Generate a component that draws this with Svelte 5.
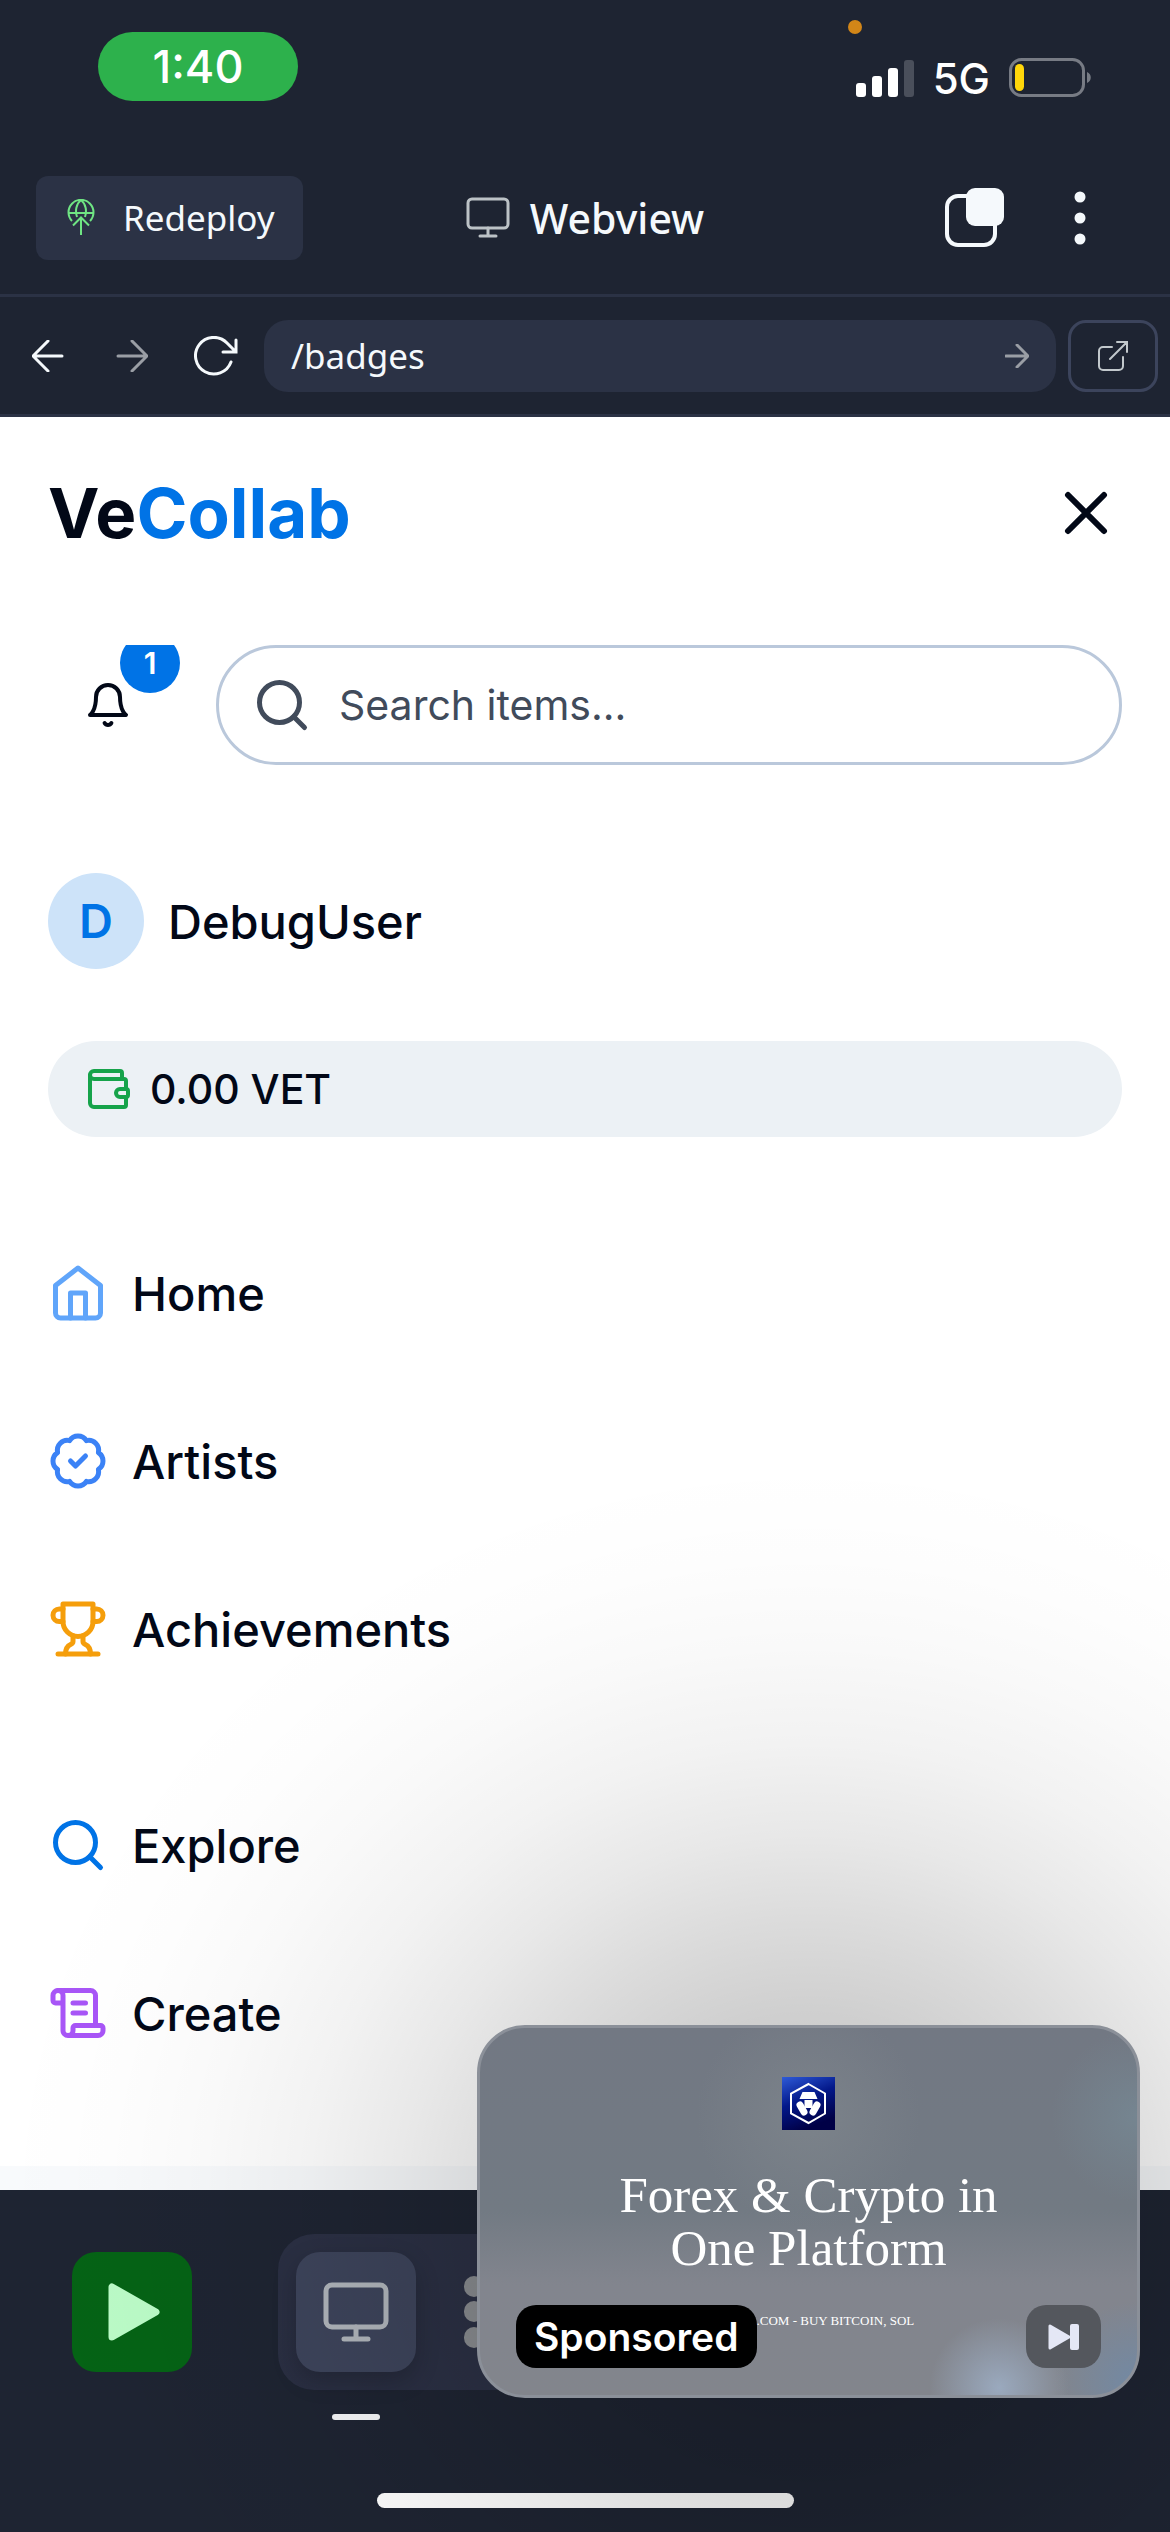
<script>
  const main = [
    { id: 'home', label: 'Home' },
    { id: 'artists', label: 'Artists' },
    { id: 'achievements', label: 'Achievements' },
  ];
  const extra = [
    { id: 'explore', label: 'Explore' },
    { id: 'create', label: 'Create' },
  ];
  const bars = [14, 21, 29, 37];
  let path = $state('/badges');
</script>

{#snippet navItem(item)}
  <li>
    <a class="nav-link" href="#{item.id}">
      <svg class="icon {item.id}" viewBox="0 0 24 24" width="60" height="60" aria-hidden="true">
        {#if item.id === 'home'}
          <path d="m3 9 9-7 9 7v11a2 2 0 0 1-2 2H5a2 2 0 0 1-2-2z" />
          <path d="M9 22V12h6v10" />
        {:else if item.id === 'artists'}
          <path d="M3.85 8.62a4 4 0 0 1 4.78-4.77 4 4 0 0 1 6.74 0 4 4 0 0 1 4.78 4.78 4 4 0 0 1 0 6.74 4 4 0 0 1-4.77 4.78 4 4 0 0 1-6.75 0 4 4 0 0 1-4.78-4.77 4 4 0 0 1 0-6.76Z" />
          <path d="m9 12 2 2 4-4" />
        {:else if item.id === 'achievements'}
          <path d="M6 9H4.5a2.5 2.5 0 0 1 0-5H6" />
          <path d="M18 9h1.5a2.5 2.5 0 0 0 0-5H18" />
          <path d="M4 22h16" />
          <path d="M10 14.66V17c0 .55-.47.98-.97 1.21C7.85 18.75 7 20.24 7 22" />
          <path d="M14 14.66V17c0 .55.47.98.97 1.21C16.15 18.75 17 20.24 17 22" />
          <path d="M18 2H6v7a6 6 0 0 0 12 0V2Z" />
        {:else if item.id === 'explore'}
          <circle cx="11" cy="11" r="8" />
          <path d="m21 21-4.3-4.3" />
        {:else}
          <path d="M15 12h-5M15 8h-5" />
          <path d="M19 17V5a2 2 0 0 0-2-2H4" />
          <path d="M8 21h12a2 2 0 0 0 2-2v-1a1 1 0 0 0-1-1H11a1 1 0 0 0-1 1v1a2 2 0 1 1-4 0V5a2 2 0 1 0-4 0v2a1 1 0 0 0 1 1h3" />
        {/if}
      </svg>
      {item.label}
    </a>
  </li>
{/snippet}

<div class="screen">
  <header class="chrome">
    <div class="status">
      <span class="clock">1:40</span>
      <div class="signals">
        <span class="mic-dot"></span>
        <svg width="58" height="37" viewBox="0 0 58 37" aria-hidden="true">
          {#each bars as h, i}
            <rect x={i * 16} y={37 - h} width="10" height={h} rx="3" fill={i === 3 ? '#4a4f5b' : '#fff'} />
          {/each}
        </svg>
        <span class="network">5G</span>
        <svg width="84" height="40" viewBox="0 0 84 40" aria-hidden="true">
          <rect x="1.5" y="1.5" width="73" height="36" rx="11" fill="none" stroke="#777b84" stroke-width="3" />
          <rect x="6" y="6" width="9" height="27" rx="4.5" fill="#ffd60a" />
          <path d="M78 14c5 2 5 9 0 11z" fill="#777b84" />
        </svg>
      </div>
    </div>

    <div class="toolbar">
      <button class="redeploy">
        <svg width="28" height="37" viewBox="0 0 28 37" fill="none" stroke="#6fe583" stroke-width="2" aria-hidden="true">
          <path d="M5 22a12.5 12.5 0 1 1 18 0" />
          <path d="M1 14h26M10 18C8 12 9 5 14 1c5 4 6 11 4 17" />
          <path d="M14 36V18M6 26.5l8-8 8 8" />
        </svg>
        Redeploy
      </button>
      <h1 class="view-name">
        <svg class="icon thin" viewBox="0 0 44 41" width="44" height="41" aria-hidden="true">
          <rect x="2" y="2" width="40" height="29" rx="4" />
          <path d="M22 31v8M14 39h16" />
        </svg>
        Webview
      </h1>
      <div class="tools">
        <button class="plain" aria-label="Tabs">
          <svg width="60" height="60" viewBox="0 0 60 60" aria-hidden="true">
            <rect x="3" y="8" width="48" height="49" rx="11" fill="none" stroke="#f5f9fc" stroke-width="4" />
            <rect x="22" y="0" width="38" height="38" rx="9" fill="#f5f9fc" />
          </svg>
        </button>
        <button class="plain" aria-label="More">
          <svg width="12" height="54" viewBox="0 0 12 54" fill="#f5f9fc" aria-hidden="true">
            <circle cx="6" cy="6" r="5.5" /><circle cx="6" cy="27" r="5.5" /><circle cx="6" cy="48" r="5.5" />
          </svg>
        </button>
      </div>
    </div>

    <form class="address" onsubmit={(e) => e.preventDefault()}>
      <button type="button" class="plain step" aria-label="Back">
        <svg class="icon small" viewBox="0 0 32 32" width="32" height="32" aria-hidden="true"><path d="M30 16H2M16 1 1 16l15 15" /></svg>
      </button>
      <button type="button" class="plain step dim" aria-label="Forward">
        <svg class="icon small" viewBox="0 0 32 32" width="32" height="32" aria-hidden="true"><path d="M2 16h28M16 1l15 15-15 15" /></svg>
      </button>
      <button type="button" class="plain step" aria-label="Reload">
        <svg class="icon small" viewBox="0 0 44 40" width="44" height="40" aria-hidden="true"><path d="M37 26A18.3 18.3 0 1 1 33 7l9 9M42 4v12H29" /></svg>
      </button>
      <div class="url">
        <input aria-label="Path" bind:value={path} />
        <button class="plain dim" aria-label="Go">
          <svg class="icon small" viewBox="0 0 24 24" width="24" height="24" aria-hidden="true"><path d="M1 12h21M12 1l11 11-11 11" /></svg>
        </button>
      </div>
      <button type="button" class="external" aria-label="Open in new tab">
        <svg class="icon fine" viewBox="0 0 30 30" width="30" height="30" aria-hidden="true"><path d="M14 6H5a4 4 0 0 0-4 4v15a4 4 0 0 0 4 4h16a4 4 0 0 0 4-4v-9M19 1h10v10M29 1 12 18" /></svg>
      </button>
    </form>
  </header>

  <main class="drawer">
    <div class="brand-row">
      <a class="brand" href="#top">Ve<span>Collab</span></a>
      <button class="plain" aria-label="Close menu">
        <svg class="icon" viewBox="0 0 24 24" width="72" height="72" aria-hidden="true"><path d="M18 6 6 18M6 6l12 12" /></svg>
      </button>
    </div>

    <div class="search-row">
      <button class="bell" aria-label="Notifications">
        <svg class="icon" viewBox="0 0 24 24" width="48" height="48" aria-hidden="true">
          <path d="M6 8a6 6 0 0 1 12 0c0 7 3 9 3 9H3s3-2 3-9" />
          <path d="M10.3 21a1.94 1.94 0 0 0 3.4 0" />
        </svg>
        <span class="badge">1</span>
      </button>
      <label class="search">
        <svg class="icon" viewBox="0 0 24 24" width="60" height="60" aria-hidden="true">
          <circle cx="11" cy="11" r="8" />
          <path d="m21 21-4.3-4.3" />
        </svg>
        <input type="search" aria-label="Search items" placeholder="Search items..." />
      </label>
    </div>

    <div class="user">
      <span class="avatar">D</span>
      <span>DebugUser</span>
    </div>

    <div class="wallet">
      <svg class="icon" viewBox="0 0 24 24" width="48" height="48" aria-hidden="true">
        <path d="M19 7V4a1 1 0 0 0-1-1H5a2 2 0 0 0 0 4h15a1 1 0 0 1 1 1v4h-3a2 2 0 0 0 0 4h3a1 1 0 0 0 1-1v-2a1 1 0 0 0-1-1" />
        <path d="M3 5v14a2 2 0 0 0 2 2h15a1 1 0 0 0 1-1v-4" />
      </svg>
      0.00 VET
    </div>

    <nav>
      <ul>{#each main as item}{@render navItem(item)}{/each}</ul>
      <ul>{#each extra as item}{@render navItem(item)}{/each}</ul>
    </nav>
  </main>
  <div class="page-edge"></div>

  <footer class="dock">
    <button class="run" aria-label="Run">
      <svg width="52" height="58" viewBox="0 0 52 58" aria-hidden="true">
        <path d="M4 4v50l44-25z" fill="#bbfbc7" stroke="#bbfbc7" stroke-width="7" stroke-linejoin="round" />
      </svg>
    </button>
    <div class="tabs">
      <div class="tab-slot">
        <button class="tab active" aria-label="Webview tab">
          <svg class="icon thick" viewBox="0 0 66 60" width="66" height="60" aria-hidden="true">
            <rect x="3" y="3" width="60" height="42" rx="6" />
            <path d="M33 45v12M21 57h24" />
          </svg>
        </button>
        <span class="indicator"></span>
      </div>
      <button class="tab" aria-label="All tools">
        <svg width="60" height="72" viewBox="0 0 60 72" fill="#898c90" aria-hidden="true">
          {#each [0, 25, 51] as y}
            {#each [0, 20, 40] as x}
              <rect {x} {y} width="20" height="21" rx="10" />
            {/each}
          {/each}
        </svg>
      </button>
    </div>
    <div class="home-bar"></div>
  </footer>

  <aside class="floating">
    <div class="ad">
      <svg class="ad-logo" width="53" height="53" viewBox="0 0 53 53" aria-hidden="true">
        <defs>
          <linearGradient id="adblue" x1="0" y1="0" x2="0.4" y2="1">
            <stop offset="0" stop-color="#2f5bd8" />
            <stop offset="0.5" stop-color="#03188a" />
            <stop offset="1" stop-color="#000046" />
          </linearGradient>
        </defs>
        <rect width="53" height="53" fill="url(#adblue)" />
        <path d="M26.5 7 43 16.5v20L26.5 46 9 36.5v-20z" fill="none" stroke="#fff" stroke-width="2" />
        <path d="M20.5 15h12l3 7h-18zM22.5 23h8v8h-8z" fill="#fff" />
        <path d="m18 28 4 7M35 28l-4 7" stroke="#fff" stroke-width="7" stroke-linecap="round" />
      </svg>
      <p class="ad-title">Forex &amp; Crypto in<br />One Platform</p>
      <div class="ad-row">
        <span class="sponsored">Sponsored</span>
        <span class="ad-note">.COM - BUY BITCOIN, SOL</span>
        <button class="skip" aria-label="Skip">
          <svg width="31" height="26" viewBox="0 0 31 26" fill="#e4e7f5" aria-hidden="true">
            <path d="M2 2v22l19-11z" stroke="#e4e7f5" stroke-width="3" stroke-linejoin="round" />
            <rect x="22" y="0" width="9" height="26" rx="2" />
          </svg>
        </button>
      </div>
    </div>
  </aside>
</div>

<style>
  :global(body) {
    margin: 0;
    background: #1e2432;
  }
  * {
    box-sizing: border-box;
  }
  svg {
    display: block;
    flex: none;
  }
  button,
  input {
    font: inherit;
    color: inherit;
    border: 0;
    padding: 0;
    background: none;
  }
  input {
    outline: none;
    min-width: 0;
    flex: 1;
  }
  .icon {
    fill: none;
    stroke: currentColor;
    stroke-width: 2;
    stroke-linecap: round;
    stroke-linejoin: round;
  }
  .screen {
    position: relative;
    display: flex;
    flex-direction: column;
    min-height: 100vh;
    overflow: hidden;
    font-family: Inter, 'Liberation Sans', sans-serif;
    color: #020817;
  }

  .chrome {
    background: #1e2432;
    color: #f5f9fc;
    font-family: 'Noto Sans', sans-serif;
  }
  .plain {
    display: flex;
    align-items: center;
    justify-content: center;
  }
  .status {
    display: flex;
    justify-content: space-between;
    align-items: flex-start;
    padding: 32px 77px 0 98px;
    height: 141px;
    color: #fff;
    font-family: Inter, sans-serif;
    font-weight: 500;
  }
  .clock {
    width: 200px;
    line-height: 69px;
    border-radius: 35px;
    background: #2db14c;
    text-align: center;
    font-size: 45px;
  }
  .signals {
    position: relative;
    display: flex;
    align-items: center;
    gap: 19px;
    height: 92px;
  }
  .mic-dot {
    position: absolute;
    left: -8px;
    top: -12px;
    width: 14px;
    height: 14px;
    border-radius: 50%;
    background: #d28618;
  }
  .network {
    font-size: 42px;
  }
  .toolbar {
    display: grid;
    grid-template-columns: 1fr auto 1fr;
    align-items: center;
    height: 153px;
    padding: 0 36px;
  }
  .redeploy {
    display: flex;
    align-items: center;
    justify-self: start;
    gap: 28px;
    height: 84px;
    padding: 0 28px 0 31px;
    border-radius: 12px;
    background: #2b3245;
    font-size: 35px;
  }
  .view-name {
    display: flex;
    align-items: center;
    gap: 20px;
    margin: 0;
    font-size: 41px;
    font-weight: 500;
  }
  .thin {
    color: #bcc2c6;
    stroke-width: 3;
  }
  .thick {
    color: #b0b5bb;
    stroke-width: 5;
  }
  .tools {
    display: flex;
    justify-self: end;
    align-items: center;
    gap: 70px;
    padding-right: 48px;
  }
  .address {
    display: flex;
    align-items: center;
    height: 123px;
    padding: 0 12px 0 6px;
    border-top: 3px solid #2b3245;
    border-bottom: 3px solid #2b3245;
    font-size: 35px;
  }
  .step {
    width: 84px;
    height: 72px;
  }
  .small {
    stroke-width: 3;
    stroke-linejoin: miter;
  }
  .fine {
    stroke-linejoin: miter;
  }
  .dim {
    color: #9a9ea5;
  }
  .url {
    display: flex;
    align-items: center;
    flex: 1;
    min-width: 0;
    height: 72px;
    margin: 0 12px 0 6px;
    padding: 0 27px;
    border-radius: 24px;
    background: #2b3245;
  }
  .external {
    display: flex;
    align-items: center;
    justify-content: center;
    width: 90px;
    height: 72px;
    border: 3px solid #3c445c;
    border-radius: 18px;
    color: #c2c8cc;
  }

  .drawer {
    flex: 1;
    padding: 60px 48px 93px;
    background: #fff;
  }
  .brand-row {
    display: flex;
    align-items: center;
    justify-content: space-between;
    height: 72px;
  }
  .brand {
    color: inherit;
    font-size: 69px;
    font-weight: 700;
    line-height: 68px;
    text-decoration: none;
  }
  .brand span {
    color: #0073e6;
  }
  .search-row {
    display: flex;
    gap: 48px;
    height: 120px;
    margin-top: 96px;
    overflow: hidden;
  }
  .bell {
    position: relative;
    display: flex;
    align-items: center;
    justify-content: center;
    width: 120px;
  }
  .badge {
    position: absolute;
    top: -12px;
    right: -12px;
    width: 60px;
    border-radius: 30px;
    background: #0073e6;
    color: #fff;
    font-size: 30px;
    font-weight: 600;
    line-height: 60px;
  }
  .search {
    display: flex;
    align-items: center;
    flex: 1;
    gap: 27px;
    padding: 0 33px;
    border: 3px solid #bac8db;
    border-radius: 60px;
    color: #414b5b;
    font-size: 41px;
  }
  .search input::placeholder {
    color: #414b5b;
    opacity: 1;
  }
  .user {
    display: flex;
    align-items: center;
    gap: 24px;
    margin-top: 108px;
    font-size: 47px;
    font-weight: 500;
  }
  .avatar {
    width: 96px;
    border-radius: 48px;
    background: #cde3f9;
    color: #0073e6;
    font-weight: 600;
    line-height: 96px;
    text-align: center;
  }
  .wallet {
    display: flex;
    align-items: center;
    gap: 18px;
    height: 96px;
    margin-top: 72px;
    padding: 0 36px;
    border-radius: 48px;
    background: #ecf1f5;
    font-size: 41px;
    font-weight: 500;
  }
  .wallet .icon {
    color: #16a34a;
  }
  nav {
    display: flex;
    flex-direction: column;
    gap: 96px;
    margin-top: 96px;
  }
  ul {
    display: flex;
    flex-direction: column;
    gap: 48px;
    margin: 0;
    padding: 0;
    list-style: none;
  }
  .nav-link {
    display: flex;
    align-items: center;
    gap: 24px;
    height: 120px;
    color: inherit;
    font-size: 47px;
    font-weight: 500;
    text-decoration: none;
  }
  .home {
    color: #60a5fa;
  }
  .artists {
    color: #3b82f6;
  }
  .achievements {
    color: #f59e0b;
  }
  .explore {
    color: #0073e6;
  }
  .create {
    color: #a855f7;
  }
  .page-edge {
    height: 24px;
    background: #f8fafc;
  }

  .dock {
    display: grid;
    grid-template-columns: auto 1fr;
    grid-template-rows: auto 1fr;
    column-gap: 86px;
    height: 342px;
    padding: 44px 0 24px 72px;
    background: #1e2432;
  }
  .run,
  .tab {
    display: flex;
    align-items: center;
    justify-content: center;
    width: 120px;
    height: 120px;
    border-radius: 24px;
  }
  .run {
    margin-top: 18px;
    padding-left: 4px;
    background: #056315;
  }
  .tabs {
    display: flex;
    gap: 18px;
    height: 156px;
    margin-right: 278px;
    padding: 18px;
    border-radius: 36px;
    background: #2b3044;
  }
  .tab-slot {
    display: flex;
    flex-direction: column;
    align-items: center;
    gap: 42px;
  }
  .tab {
    flex: none;
  }
  .active {
    background: #3d445b;
    box-shadow: 0 9px 24px rgba(0, 0, 0, 0.2);
  }
  .indicator {
    flex: none;
    width: 48px;
    height: 6px;
    border-radius: 3px;
    background: #f5f6f8;
  }
  .home-bar {
    grid-column: 1 / -1;
    place-self: end center;
    width: 417px;
    height: 15px;
    margin-right: 72px;
    border-radius: 8px;
    background: #fff;
  }

  .floating {
    position: absolute;
    right: 30px;
    bottom: 134px;
    width: 663px;
  }
  /* Wide soft shadow around the floating card */
  .floating::before {
    content: '';
    position: absolute;
    inset: -570px -480px;
    pointer-events: none;
    background: radial-gradient(
      closest-side,
      rgba(0, 0, 0, 0.26) 0%,
      rgba(0, 0, 0, 0.19) 26%,
      rgba(0, 0, 0, 0.14) 38%,
      rgba(0, 0, 0, 0.09) 50%,
      rgba(0, 0, 0, 0.05) 62%,
      rgba(0, 0, 0, 0.022) 75%,
      rgba(0, 0, 0, 0.008) 87%,
      transparent 100%
    );
  }
  .ad {
    position: relative;
    display: flex;
    flex-direction: column;
    align-items: center;
    height: 373px;
    padding: 49px 36px 27px;
    border: 3px solid #8b9099;
    border-radius: 48px;
    color: #fff;
    background:
      radial-gradient(circle at 79% 98%, rgba(160, 178, 202, 0.8), transparent 11%),
      radial-gradient(circle at 100% 97%, rgba(110, 138, 170, 0.8), transparent 11%),
      radial-gradient(circle at 100% 24%, rgba(120, 145, 158, 0.5), transparent 12%),
      radial-gradient(circle at 50% 24%, rgba(130, 137, 143, 0.6), transparent 26%),
      linear-gradient(#727883 0%, #727a83 50%, #82858e 70%, #82858c 100%);
  }
  .ad-title {
    margin: 39px 0 0;
    font-family: 'Liberation Serif', serif;
    font-size: 51px;
    line-height: 53px;
    text-align: center;
  }
  .ad-row {
    display: flex;
    align-items: flex-start;
    align-self: stretch;
    margin-top: auto;
  }
  .sponsored {
    padding: 0 18px;
    border-radius: 20px;
    background: #000;
    font-size: 39px;
    font-weight: 600;
    line-height: 63px;
  }
  .ad-note {
    font-family: 'Liberation Serif', serif;
    font-size: 13px;
    line-height: 32px;
  }
  .skip {
    display: flex;
    align-items: center;
    justify-content: center;
    width: 75px;
    height: 63px;
    margin-left: auto;
    border-radius: 20px;
    background: #54575d;
  }
</style>
